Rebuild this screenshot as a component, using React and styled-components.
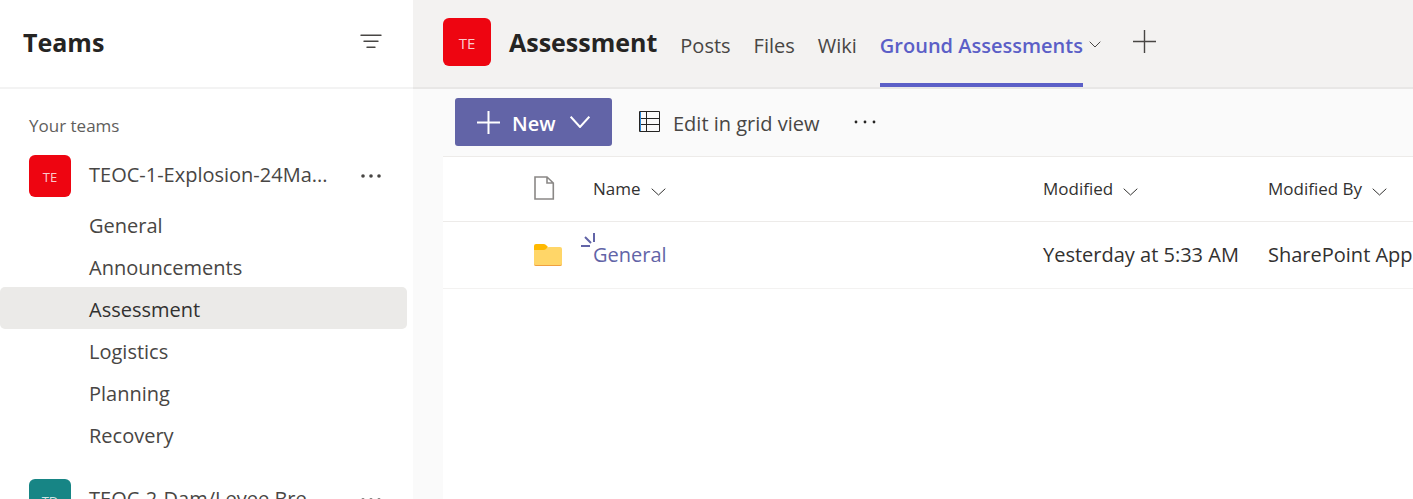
import React from "react";
import styled, { createGlobalStyle } from "styled-components";

const GlobalStyle = createGlobalStyle`
  * { box-sizing: border-box; }
  body {
    margin: 0;
    background: #ffffff;
    color: #252423;
    font-family: "Segoe UI", "Open Sans", "Noto Sans", sans-serif;
    font-size: 20px;
    line-height: 28px;
  }
  button {
    font: inherit;
    color: inherit;
    background: none;
    border: 0;
    padding: 0;
    cursor: pointer;
  }
  a { color: inherit; text-decoration: none; }
  svg { display: block; flex: none; }
`;

const Shell = styled.div`
  display: flex;
  height: 100vh;
  overflow: hidden;
`;

const Sidebar = styled.aside`
  flex: 0 0 413px;
  overflow: hidden;
`;

const SidebarHeader = styled.header`
  display: flex;
  align-items: center;
  justify-content: space-between;
  height: 89px;
  padding: 0 31px 4px 23px;
  border-bottom: 2px solid #f3f3f3;
`;

const Title = styled.h1`
  margin: 0;
  font-size: 25px;
  line-height: 32px;
  font-weight: 700;
  white-space: nowrap;
`;

const SectionLabel = styled.h2`
  margin: 0;
  padding: 24px 29px 16px;
  font-size: 17px;
  line-height: 26px;
  font-weight: 400;
  color: #605e5c;
`;

const TeamRow = styled.div`
  display: flex;
  align-items: center;
  height: 42px;
  padding: 0 32px 0 29px;
  color: #484644;
`;

const Avatar = styled.span`
  display: flex;
  align-items: center;
  justify-content: center;
  flex: none;
  width: ${(p) => p.$size}px;
  height: ${(p) => p.$size}px;
  padding-top: 2px;
  border-radius: 6px;
  background: ${(p) => p.$color};
  color: rgba(255, 255, 255, 0.8);
  font-size: ${(p) => p.$text}px;
  line-height: 20px;
`;

const TeamName = styled.span`
  flex: 1;
  min-width: 0;
  padding: 0 18px 2px;
  white-space: nowrap;
`;

const ChannelList = styled.ul`
  list-style: none;
  margin: 0;
  padding: 6px 6px 24px 0;
`;

const Channel = styled.a`
  display: flex;
  align-items: center;
  height: 42px;
  padding: 4px 0 0 89px;
  border-radius: 5px;
  background: ${(p) => (p.$active ? "#ebeae8" : "transparent")};
  color: ${(p) => (p.$active ? "#323130" : "#484644")};
`;

const Main = styled.main`
  display: flex;
  flex-direction: column;
  flex: 1;
  min-width: 0;
  background: #fafafa;
`;

const ChannelHeader = styled.header`
  display: flex;
  align-items: stretch;
  flex: none;
  height: 89px;
  padding-left: 30px;
  background: #f3f2f1;
  border-bottom: 2px solid #e8e7e6;
`;

const ChannelIdentity = styled.div`
  display: flex;
  align-items: center;
  gap: 18px;
  padding: 0 23px 3px 0;
`;

const Tabs = styled.nav`
  display: flex;
  gap: 23px;
`;

const Tab = styled.a`
  display: flex;
  align-items: center;
  padding-top: 9px;
  border-bottom: 4px solid ${(p) => (p.$active ? "#5b5fc7" : "transparent")};
  color: ${(p) => (p.$active ? "#5b5fc7" : "#484644")};
  font-weight: ${(p) => (p.$active ? 600 : 400)};
  white-space: nowrap;
`;

const HeaderButton = styled.button`
  display: flex;
  align-items: center;
  padding: ${(p) => (p.$raised ? "0 0 4px" : "2px 0 0")};
  margin-left: ${(p) => p.$gap}px;
  color: #484644;
`;

const Toolbar = styled.div`
  display: flex;
  align-items: center;
  flex: none;
  height: 67px;
  margin-left: 30px;
  padding: 0 12px 1px;
`;

const NewButton = styled.button`
  display: flex;
  align-items: center;
  gap: 12px;
  width: 157px;
  height: 48px;
  padding: 0 22px;
  border-radius: 3px;
  background: #6264a7;
  color: #ffffff;
  font-weight: 600;

  span { padding-top: 4px; flex: 1; text-align: left; }
`;

const GridButton = styled.button`
  display: flex;
  align-items: center;
  gap: 12px;
  margin: 0 34px 0 27px;
  color: #484644;
  white-space: nowrap;

  span { padding-top: 4px; }
`;

const Library = styled.div`
  flex: 1;
  margin-left: 30px;
  background: #ffffff;
  border-top: 1px solid #edebe9;
  overflow: hidden;
`;

const FileTable = styled.table`
  width: 100%;
  table-layout: fixed;
  border-collapse: separate;
  border-spacing: 0;
`;

const HeadCell = styled.th`
  width: ${(p) => (p.$width ? `${p.$width}px` : "auto")};
  height: 65px;
  padding: 0 0 2px;
  border-bottom: 1px solid #edebe9;
  font-size: 17px;
  font-weight: 400;
  text-align: left;
`;

const SortButton = styled.button`
  display: flex;
  align-items: center;
  gap: 10px;
  padding-top: 2px;
  white-space: nowrap;
  color: #323130;

  svg { margin-top: 5px; }
`;

const Cell = styled.td`
  height: 67px;
  padding: 0;
  border-bottom: 1px solid #f3f2f1;
  color: #323130;
  white-space: nowrap;
`;

const FileLink = styled.a`
  position: relative;
  color: #6264a7;
`;

const NewMark = styled.svg`
  position: absolute;
  left: -12px;
  top: -8px;
`;

const Chevron = ({ width, height, stroke = 1 }) => (
  <svg width={width} height={height} viewBox={`0 0 ${width} ${height}`} fill="none" stroke="currentColor" strokeWidth={stroke} aria-hidden="true">
    <path d={`M.7 .7 L${width / 2} ${height - 1} L${width - 0.7} .7`} />
  </svg>
);

const Plus = ({ size, stroke }) => (
  <svg width={size} height={size} viewBox="0 0 23 23" stroke="currentColor" strokeWidth={stroke} aria-hidden="true">
    <path d="M11.5 0V23M0 11.5H23" />
  </svg>
);

const Dots = ({ width, radius, color }) => (
  <svg width={width} height="6" viewBox={`0 0 ${width} 6`} fill={color} aria-hidden="true">
    <circle cx="2" cy="3" r={radius} />
    <circle cx={width / 2} cy="3" r={radius} />
    <circle cx={width - 2} cy="3" r={radius} />
  </svg>
);

const FilterIcon = () => (
  <svg width="22" height="16" viewBox="0 0 22 16" stroke="#484644" strokeWidth="1.4" strokeLinecap="round" aria-hidden="true">
    <path d="M1 1.3H21M4 7.3H18M7 13.3H15" />
  </svg>
);

const GridIcon = () => (
  <svg width="22" height="22" viewBox="0 0 22 22" fill="none" stroke="#252423" aria-hidden="true">
    <path d="M.5 .5H20.5V20.5H.5ZM7.5 .5V20.5M.5 7.5H20.5M.5 13.5H20.5" />
    <path d="M1.5 1V20" stroke="#2b88d8" />
  </svg>
);

const PageIcon = () => (
  <svg width="21" height="24" viewBox="0 0 21 24" fill="none" stroke="#8a8886" strokeWidth="1.6" aria-hidden="true">
    <path d="M1 1H13L19.3 7V23H1ZM13 1V7H19.3" />
  </svg>
);

const FolderIcon = () => (
  <svg width="28" height="22" viewBox="0 0 28 22" aria-hidden="true">
    <path d="M0 2Q0 0 2 0H9.500Q11 0 12 1L14 3L12 6H0Z" fill="#ffb900" />
    <path d="M0 6H9.500Q11 6 12 5L13.500 3.500Q14 3 15 3H26Q28 3 28 5V20Q28 22 26 22H2Q0 22 0 20Z" fill="#ffd668" />
    <path d="M0 19.500V20Q0 22 2 22H26Q28 22 28 20V19.500Q28 21 26 21H2Q0 21 0 19.500Z" fill="#f0a040" />
  </svg>
);

const teams = [
  {
    name: "TEOC-1-Explosion-24Ma...",
    initials: "TE",
    color: "#ee0511",
    channels: ["General", "Announcements", "Assessment", "Logistics", "Planning", "Recovery"],
  },
  { name: "TEOC-2-Dam/Levee Bre...", initials: "TD", color: "#178585", channels: [] },
];

const tabs = ["Posts", "Files", "Wiki", "Ground Assessments"];

export default function App() {
  return (
    <>
      <GlobalStyle />
      <Shell>
        <Sidebar>
          <SidebarHeader>
            <Title>Teams</Title>
            <button aria-label="Filter"><FilterIcon /></button>
          </SidebarHeader>
          <SectionLabel>Your teams</SectionLabel>
          {teams.map((team) => (
            <section key={team.name}>
              <TeamRow>
                <Avatar $size={42} $text={13} $color={team.color}>{team.initials}</Avatar>
                <TeamName>{team.name}</TeamName>
                <button aria-label="More options"><Dots width={20} radius={1.8} color="#484644" /></button>
              </TeamRow>
              <ChannelList>
                {team.channels.map((name) => (
                  <li key={name}>
                    <Channel href="#" $active={name === "Assessment"}>{name}</Channel>
                  </li>
                ))}
              </ChannelList>
            </section>
          ))}
        </Sidebar>

        <Main>
          <ChannelHeader>
            <ChannelIdentity>
              <Avatar $size={48} $text={15} $color="#ee0511">TE</Avatar>
              <Title>Assessment</Title>
            </ChannelIdentity>
            <Tabs>
              {tabs.map((name) => (
                <Tab key={name} href="#" $active={name === "Ground Assessments"}>{name}</Tab>
              ))}
            </Tabs>
            <HeaderButton $gap={6} aria-label="Tab options"><Chevron width={12} height={7} /></HeaderButton>
            <HeaderButton $gap={32} $raised aria-label="Add a tab"><Plus size={23} stroke={1.4} /></HeaderButton>
          </ChannelHeader>

          <Toolbar>
            <NewButton>
              <Plus size={23} stroke={2} />
              <span>New</span>
              <Chevron width={20} height={12} stroke={2} />
            </NewButton>
            <GridButton><GridIcon /><span>Edit in grid view</span></GridButton>
            <button aria-label="More commands"><Dots width={22} radius={1.4} color="#252423" /></button>
          </Toolbar>

          <Library>
            <FileTable>
              <thead>
                <tr>
                  <HeadCell $width={91} aria-label="Select" />
                  <HeadCell $width={59} aria-label="File type"><PageIcon /></HeadCell>
                  <HeadCell><SortButton>Name<Chevron width={15} height={8} /></SortButton></HeadCell>
                  <HeadCell $width={225}><SortButton>Modified<Chevron width={15} height={8} /></SortButton></HeadCell>
                  <HeadCell $width={145}><SortButton>Modified By<Chevron width={15} height={8} /></SortButton></HeadCell>
                </tr>
              </thead>
              <tbody>
                <tr>
                  <Cell />
                  <Cell><FolderIcon /></Cell>
                  <Cell>
                    <FileLink href="#">
                      <NewMark width="14" height="14" viewBox="0 0 14 14" fill="none" stroke="#6264a7" strokeWidth="2" aria-hidden="true">
                        <path d="M0 13H9M4 4L10 10M13 0V9" />
                      </NewMark>
                      General
                    </FileLink>
                  </Cell>
                  <Cell>Yesterday at 5:33 AM</Cell>
                  <Cell>SharePoint App</Cell>
                </tr>
              </tbody>
            </FileTable>
          </Library>
        </Main>
      </Shell>
    </>
  );
}
